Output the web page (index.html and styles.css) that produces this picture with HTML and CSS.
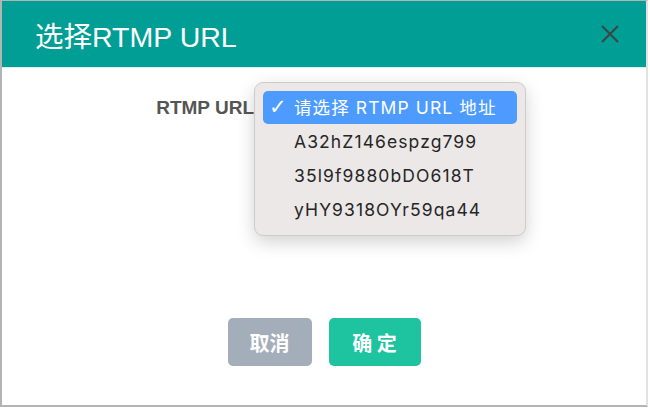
FILE: index.html
```html
<!DOCTYPE HTML>
<html>
<head>
  <meta charset="UTF-8">
  <title>选择RTMP URL</title>
  <link rel="stylesheet" href="styles.css">
</head>
<body>
  <div class="dialog">
    <div class="dialog-header">
      <h2>选择RTMP URL</h2>
      <span class="close">
        <svg width="20" height="20" viewBox="0 0 20 20"><path d="M2 2 L18 18 M18 2 L2 18" stroke="#3a4646" stroke-width="2" fill="none"/></svg>
      </span>
    </div>
    <div class="dialog-body">
      <div class="form-row">
        <label class="label">RTMP URL</label>
        <div class="select-wrap">
          <ul class="options">
            <li class="selected"><span class="check">✓</span>请选择 RTMP URL 地址</li>
            <li>A32hZ146espzg799</li>
            <li>35l9f9880bDO618T</li>
            <li>yHY9318OYr59qa44</li>
          </ul>
        </div>
      </div>
    </div>
    <div class="dialog-footer">
      <button class="btn btn-cancel">取消</button>
      <button class="btn btn-ok">确 定</button>
    </div>
  </div>
</body>
</html>
```

FILE: styles.css
```css
body { margin: 0; padding: 0; background: #fff; font-family: "Liberation Sans", "Noto Sans CJK SC", sans-serif; }

.dialog {
  width: 648px;
  height: 407px;
  box-sizing: border-box;
  border: 2px solid #b4b4b4;
  border-top-width: 1px;
  border-right-color: #e2e2e2;
  display: flex;
  flex-direction: column;
  background: #fff;
}

.dialog-header {
  height: 66px;
  background: #009e94;
  border-bottom: 1px solid #d8f0ee;
  display: flex;
  align-items: center;
  justify-content: space-between;
  padding: 0 26px 0 33px;
}
.dialog-header h2 {
  margin: 0;
  color: #fff;
  font-weight: normal;
  font-size: 28.5px;
}
.close { display: flex; }

.dialog-body { flex: 1; }

.form-row {
  display: flex;
  padding-top: 14px;
}
.label {
  width: 252px;
  text-align: right;
  font-weight: bold;
  font-size: 19px;
  color: #555;
  padding-top: 15px;
}
.select-wrap {
  position: relative;
}

/* the opened dropdown, drawn over the page */
.options {
  position: absolute;
  left: 0;
  top: 0;
  width: 272px;
  box-sizing: border-box;
  margin: 0;
  padding: 8px 8px;
  list-style: none;
  background: #ece8e8;
  border: 1px solid #cfcbcb;
  border-radius: 9px;
  box-shadow: 0 6px 18px rgba(0, 0, 0, 0.18);
  font-family: "Inter", "Noto Sans CJK SC", sans-serif;
  font-size: 17.5px;
  color: #262626;
}
.options li {
  height: 34px;
  line-height: 34px;
  padding-left: 31px;
  letter-spacing: 1.1px;
}
.options li.selected {
  height: 33px;
  line-height: 33px;
  margin-bottom: 1px;
  background: #4d9bff;
  color: #fff;
  border-radius: 5px;
  position: relative;
  letter-spacing: 1.1px;
}
.check {
  position: absolute;
  left: 6px;
  font-size: 21px;
  font-family: "DejaVu Sans", sans-serif;
}

.dialog-footer {
  display: flex;
  justify-content: center;
  gap: 17px;
  padding-bottom: 39px;
}
.btn {
  height: 48px;
  border: none;
  border-radius: 5px;
  color: #fff;
  font-family: "Noto Sans CJK SC", sans-serif;
  font-weight: bold;
  font-size: 20px;
  cursor: pointer;
}
.btn-cancel { width: 84px; background: #a4adba; }
.btn-ok { width: 92px; background: #1ec39f; }
```
